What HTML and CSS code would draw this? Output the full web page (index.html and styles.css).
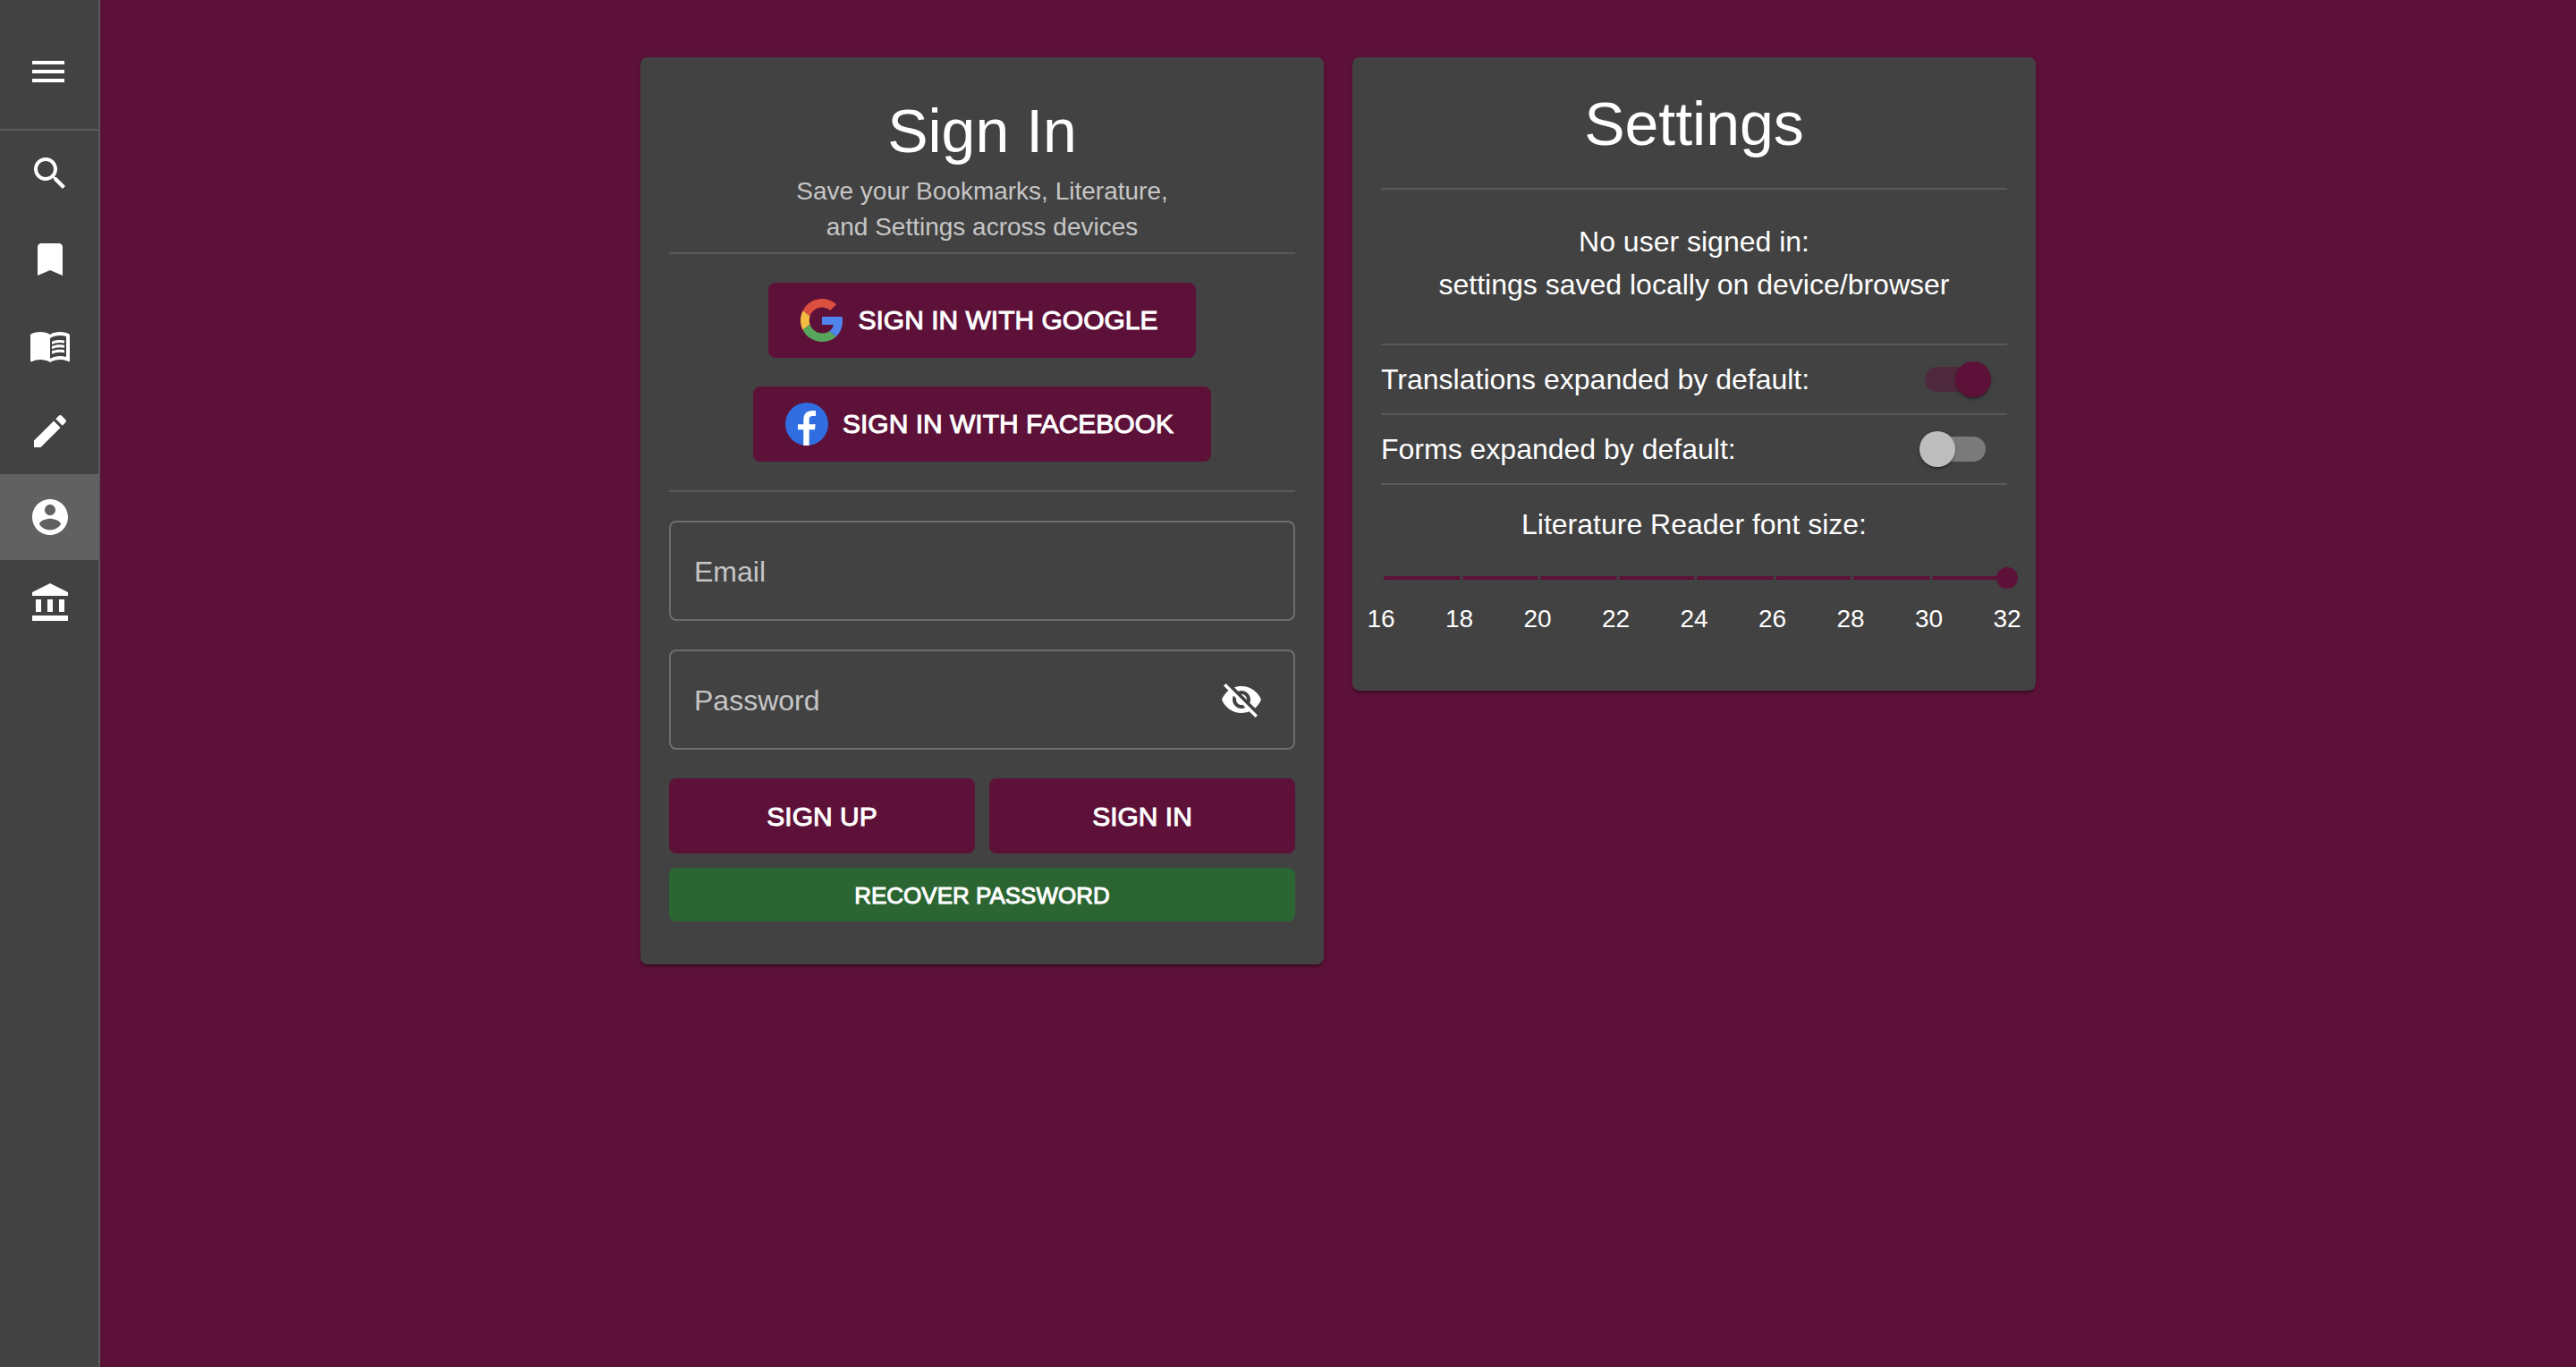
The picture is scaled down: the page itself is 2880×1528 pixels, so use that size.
FILE: index.html
```html
<!DOCTYPE html>
<html lang="en">
<head>
<meta charset="utf-8">
<title>Sign In</title>
<meta name="viewport" content="width=device-width, initial-scale=1">
<link rel="stylesheet" href="styles.css">
</head>
<body>
<div class="app">
  <aside class="sidebar">
    <div class="sidebar-header">
      <button class="icon-button" type="button" aria-label="Open menu">
        <svg class="icon" viewBox="0 0 24 24"><path d="M3 18h18v-2H3v2zm0-5h18v-2H3v2zm0-7v2h18V6H3z"/></svg>
      </button>
    </div>
    <nav class="sidebar-nav">
      <a class="nav-link" href="#search" aria-label="Search"><svg class="icon" viewBox="0 0 24 24"><path d="M15.5 14h-.79l-.28-.27C15.41 12.59 16 11.11 16 9.5 16 5.91 13.09 3 9.5 3S3 5.91 3 9.5 5.91 16 9.5 16c1.61 0 3.09-.59 4.23-1.57l.27.28v.79l5 4.99L20.49 19l-4.99-5zm-6 0C7.01 14 5 11.99 5 9.5S7.01 5 9.5 5 14 7.01 14 9.5 11.99 14 9.5 14z"/></svg></a>
      <a class="nav-link" href="#bookmarks" aria-label="Bookmarks"><svg class="icon" viewBox="0 0 24 24"><path d="M17 3H7c-1.1 0-1.99.9-1.99 2L5 21l7-3 7 3V5c0-1.1-.9-2-2-2z"/></svg></a>
      <a class="nav-link" href="#literature" aria-label="Literature"><svg class="icon" viewBox="0 0 24 24"><path d="M21 5c-1.11-.35-2.33-.5-3.5-.5-1.95 0-4.05.4-5.5 1.500-1.45-1.100-3.550-1.500-5.500-1.500S2.450 4.900 1 6v14.650c0 .25.25.5.5.5.1 0 .15-.05.25-.05C3.100 20.450 5.050 20 6.500 20c1.950 0 4.050.4 5.500 1.500 1.350-.85 3.800-1.500 5.500-1.500 1.650 0 3.350.3 4.750 1.050.1.05.15.05.25.05.25 0 .5-.25.5-.5V6c-.6-.45-1.250-.75-2-1zm0 13.500c-1.100-.35-2.300-.5-3.500-.5-1.700 0-4.150.65-5.500 1.500V8c1.350-.85 3.800-1.500 5.500-1.500 1.200 0 2.400.15 3.500.5v11.500z"/><path d="M17.500 10.500c.88 0 1.730.09 2.500.26V9.240c-.79-.15-1.640-.24-2.500-.24-1.700 0-3.240.29-4.500.83v1.660c1.130-.64 2.700-.99 4.500-.99zM13 12.490v1.660c1.130-.64 2.700-.99 4.500-.99.88 0 1.730.09 2.500.26V11.900c-.79-.15-1.640-.24-2.500-.24-1.700 0-3.240.3-4.500.83zM17.500 14.330c-1.700 0-3.240.29-4.500.83v1.660c1.130-.64 2.700-.99 4.500-.99.88 0 1.730.09 2.500.26v-1.520c-.79-.16-1.640-.24-2.500-.24z"/></svg></a>
      <a class="nav-link" href="#forms" aria-label="Forms"><svg class="icon" viewBox="0 0 24 24"><path d="M3 17.250V21h3.750L17.810 9.940l-3.750-3.750L3 17.250zM20.710 7.040c.39-.39.39-1.020 0-1.410l-2.340-2.340c-.39-.39-1.020-.39-1.410 0l-1.830 1.830 3.750 3.750 1.830-1.830z"/></svg></a>
      <a class="nav-link nav-link-active" href="#account" aria-label="Account" aria-current="page"><svg class="icon" viewBox="0 0 24 24"><path d="M12 2C6.480 2 2 6.480 2 12s4.480 10 10 10 10-4.480 10-10S17.520 2 12 2zm0 3c1.660 0 3 1.340 3 3s-1.340 3-3 3-3-1.340-3-3 1.340-3 3-3zm0 14.200c-2.500 0-4.710-1.280-6-3.220.03-1.990 4-3.080 6-3.080 1.990 0 5.970 1.090 6 3.080-1.290 1.940-3.500 3.220-6 3.220z"/></svg></a>
      <a class="nav-link" href="#about" aria-label="About"><svg class="icon" viewBox="0 0 24 24"><path d="M4 10v7h3v-7H4zm6.500 0v7h3v-7h-3zM2 22h20v-3H2v3zm15-12v7h3v-7h-3zM12 1L2 6v2h20V6L12 1z"/></svg></a>
    </nav>
  </aside>

  <main class="content">
    <section class="card card-signin">
      <h1 class="title">Sign In</h1>
      <p class="subtitle">Save your Bookmarks, Literature,<br>and Settings across devices</p>
      <div class="providers">
        <button class="button button-provider" type="button">
          <svg class="icon" viewBox="0 0 48 48"><path fill="#db4f3f" d="M24 9.500c3.540 0 6.710 1.220 9.210 3.600l6.850-6.850C35.900 2.380 30.470 0 24 0 14.620 0 6.510 5.380 2.560 13.220l7.980 6.190C12.430 13.720 17.740 9.500 24 9.500z"/><path fill="#5085ed" d="M46.980 24.550c0-1.570-.15-3.090-.38-4.550H24v9.020h12.940c-.58 2.960-2.260 5.480-4.780 7.180l7.730 6c4.510-4.180 7.090-10.360 7.090-17.650z"/><path fill="#f4bd42" d="M10.530 28.590c-.48-1.450-.76-2.990-.76-4.590s.27-3.140.76-4.590l-7.980-6.190C.92 16.460 0 20.120 0 24s.92 7.540 2.560 10.780l7.970-6.190z"/><path fill="#58a55c" d="M24 48c6.480 0 11.930-2.130 15.890-5.810l-7.730-6c-2.150 1.450-4.920 2.300-8.160 2.300-6.260 0-11.570-4.220-13.470-9.910l-7.980 6.190C6.510 42.620 14.620 48 24 48z"/></svg>
          Sign in with Google
        </button>
        <button class="button button-provider" type="button">
          <svg class="icon" viewBox="0 0 48 48"><circle cx="24" cy="24" r="24" fill="#2f6de0"/><path fill="#fff" d="M20.300 48V30.300H14V24.300h6.300v-4.800C20.300 12.300 24.300 9 30.300 9H34v6h-3.200c-3 0-4.100 1.400-4.100 4v5.300h7L33 30.300h-6.300V48z"/></svg>
          Sign in with Facebook
        </button>
      </div>
      <form class="form">
        <div class="field">
          <input class="input" type="email" aria-label="Email" placeholder="Email">
        </div>
        <div class="field">
          <input class="input" type="password" aria-label="Password" placeholder="Password">
          <button class="icon-button" type="button" aria-label="Show password">
            <svg class="icon" viewBox="0 0 24 24"><path d="M12 7c2.760 0 5 2.240 5 5 0 .65-.13 1.260-.36 1.830l2.920 2.920c1.510-1.260 2.700-2.890 3.430-4.750-1.730-4.390-6-7.500-11-7.500-1.400 0-2.740.25-3.980.7l2.160 2.160C10.740 7.130 11.350 7 12 7zM2 4.270l2.280 2.280.46.46C3.080 8.300 1.780 10.020 1 12c1.730 4.390 6 7.500 11 7.500 1.550 0 3.030-.3 4.380-.84l.42.42L19.730 22 21 20.730 3.270 3 2 4.270zM7.530 9.800l1.550 1.550c-.05.21-.08.43-.08.65 0 1.660 1.340 3 3 3 .22 0 .44-.03.65-.08l1.550 1.550c-.67.33-1.410.53-2.200.53-2.760 0-5-2.240-5-5 0-.79.2-1.530.53-2.200zm4.310-.78l3.150 3.150.02-.16c0-1.660-1.340-3-3-3l-.17.010z"/></svg>
          </button>
        </div>
        <div class="actions">
          <button class="button" type="button">Sign up</button>
          <button class="button" type="submit">Sign in</button>
          <button class="button button-recover" type="button">Recover password</button>
        </div>
      </form>
    </section>

    <section class="card">
      <h2 class="title title-settings">Settings</h2>
      <p class="status">No user signed in:<br>settings saved locally on device/browser</p>
      <label class="setting">Translations expanded by default:
        <input class="switch" type="checkbox" role="switch" checked>
      </label>
      <label class="setting">Forms expanded by default:
        <input class="switch" type="checkbox" role="switch">
      </label>
      <div class="font-size">
        <label for="font-size">Literature Reader font size:</label>
        <div class="slider">
          <div class="rail"><i></i><i></i><i></i><i></i><i></i><i></i><i></i><i></i></div>
          <input class="range" id="font-size" type="range" min="16" max="32" step="2" value="32">
        </div>
        <div class="marks"><span>16</span><span>18</span><span>20</span><span>22</span><span>24</span><span>26</span><span>28</span><span>30</span><span>32</span></div>
      </div>
    </section>
  </main>
</div>
</body>
</html>
```
FILE: styles.css
```css
:root {
  --primary: #5d1139;
  --surface: #424242;
  --divider: #595959;
  --success: #2b6532;
}

* {
  box-sizing: border-box;
}

body {
  margin: 0;
  background: var(--primary);
  color: #fff;
  font-family: "Liberation Sans", Arial, sans-serif;
  font-size: 32px;
  line-height: 48px;
}

button,
input {
  margin: 0;
  color: inherit;
  font: inherit;
}

.app {
  display: flex;
  min-height: 100vh;
}

.icon {
  display: block;
  flex: none;
  width: 48px;
  height: 48px;
  fill: currentColor;
}

.icon-button {
  display: block;
  padding: 0;
  border: 0;
  background: none;
  cursor: pointer;
}

/* Sidebar */

.sidebar {
  flex: none;
  width: 112px;
  border-right: 2px solid var(--divider);
  background: var(--surface);
}

.sidebar-header {
  padding: 56px 30px 40px;
  border-bottom: 2px solid var(--divider);
}

.nav-link {
  display: block;
  padding: 24px 32px;
  color: inherit;
}

.nav-link-active {
  background: #616161;
}

/* Cards */

.content {
  display: flex;
  flex: 1;
  flex-wrap: wrap;
  justify-content: center;
  align-items: flex-start;
  gap: 32px;
  padding: 64px 32px;
}

.card {
  width: 100%;
  max-width: 764px;
  padding: 32px;
  border-radius: 8px;
  background: var(--surface);
  box-shadow: 0 4px 2px -2px rgba(0, 0, 0, .2), 0 2px 2px rgba(0, 0, 0, .14), 0 2px 6px rgba(0, 0, 0, .12);
}

.card-signin {
  padding: 40px 32px 48px;
}

.title {
  margin: 0;
  font-size: 68px;
  font-weight: 400;
  line-height: 84px;
  text-align: center;
}

.title-settings {
  padding-bottom: 30px;
}

.subtitle {
  margin: 0;
  padding: 6px 0 8px;
  color: #c6c6c6;
  font-size: 28px;
  line-height: 40px;
  text-align: center;
}

/* Sign in */

.providers {
  display: flex;
  flex-direction: column;
  align-items: center;
  gap: 32px;
  padding: 32px 0;
  border: solid var(--divider);
  border-width: 2px 0;
}

.button {
  height: 84px;
  padding: 2px 16px 0;
  border: 0;
  border-radius: 8px;
  background: var(--primary);
  font-size: 30px;
  text-transform: uppercase;
  -webkit-text-stroke: 1px;
  cursor: pointer;
}

.button-provider {
  display: flex;
  align-items: center;
  gap: 16px;
  padding: 0 42px 0 36px;
}

.button-recover {
  grid-column: 1 / -1;
  height: 60px;
  background: var(--success);
  font-size: 26px;
}

.form {
  display: grid;
  gap: 32px;
  padding-top: 32px;
}

.field {
  display: flex;
  align-items: center;
  height: 112px;
  padding: 0 34px 0 26px;
  border: 2px solid #6e6e6e;
  border-radius: 8px;
}

.input {
  flex: 1;
  min-width: 0;
  padding: 2px 0 0;
  border: 0;
  outline: 0;
  background: none;
}

.input::placeholder {
  color: #c6c6c6;
  opacity: 1;
}

.actions {
  display: grid;
  grid-template-columns: 1fr 1fr;
  gap: 16px;
}

/* Settings */

.status {
  margin: 0;
  padding: 34px 0 42px;
  border: solid var(--divider);
  border-width: 2px 0;
  text-align: center;
}

.setting {
  display: flex;
  justify-content: space-between;
  align-items: center;
  border-bottom: 2px solid var(--divider);
}

.switch {
  appearance: none;
  display: grid;
  align-items: center;
  width: 116px;
  height: 76px;
  padding: 0 18px;
  cursor: pointer;
}

.switch::before,
.switch::after {
  content: "";
  grid-area: 1 / 1;
}

.switch::before {
  height: 28px;
  margin: 0 6px;
  border-radius: 14px;
  background: #7b7b7b;
}

.switch::after {
  width: 40px;
  height: 40px;
  border-radius: 50%;
  background: #bdbdbd;
  box-shadow: 0 4px 2px -2px rgba(0, 0, 0, .2), 0 2px 2px rgba(0, 0, 0, .14), 0 2px 6px rgba(0, 0, 0, .12);
}

.switch:checked::before {
  background: #4f293d;
}

.switch:checked::after {
  margin-left: 40px;
  background: var(--primary);
}

.font-size {
  padding: 20px 0 38px;
  text-align: center;
}

.font-size label {
  display: block;
}

.slider {
  display: grid;
  align-items: center;
  height: 72px;
}

.rail,
.range {
  grid-area: 1 / 1;
}

.rail {
  display: grid;
  grid-template-columns: repeat(8, 1fr);
  height: 4px;
  border-radius: 2px;
  background: var(--primary);
}

.rail i {
  width: 4px;
  height: 4px;
  border-radius: 2px;
  background: var(--surface);
}

.range {
  appearance: none;
  height: 24px;
  margin: 0 -12px;
  background: none;
  cursor: pointer;
}

.range::-webkit-slider-thumb {
  appearance: none;
  width: 24px;
  height: 24px;
  border-radius: 50%;
  background: var(--primary);
}

.marks {
  display: flex;
  justify-content: space-between;
  margin: 0 -16px;
  font-size: 28px;
  line-height: 20px;
}

.marks span {
  width: 32px;
}
```
